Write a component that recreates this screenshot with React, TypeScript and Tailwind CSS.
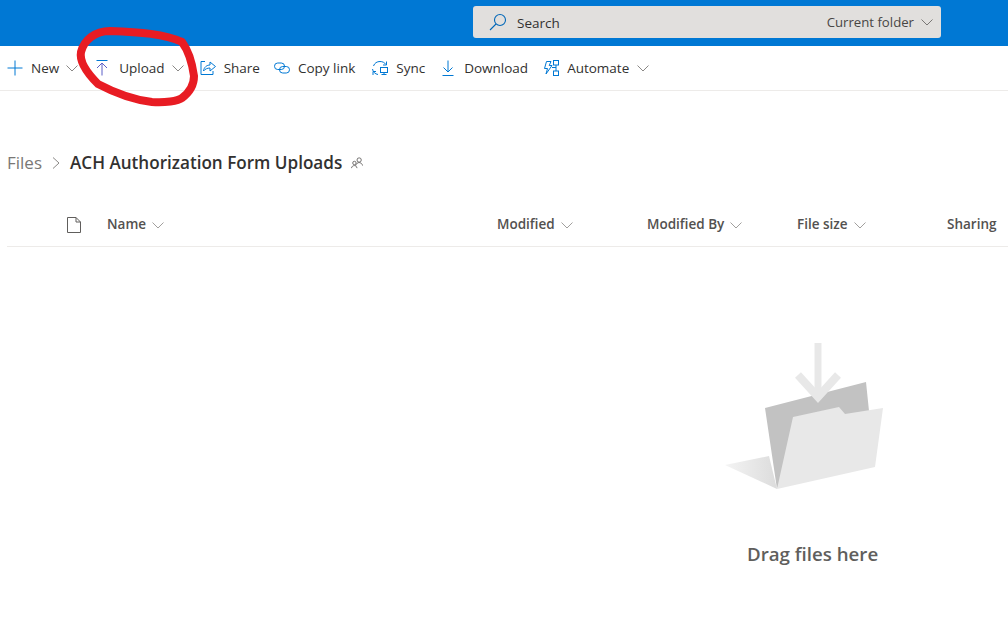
import type { ReactNode } from "react";

const font = { sans: "font-['Open_Sans','Noto_Sans',sans-serif]" };

function Chevron({ className = "" }: { className?: string }) {
  return (
    <svg width="12" height="12" viewBox="0 0 12 12" fill="none" stroke="currentColor" strokeWidth="1" className={className}>
      <path d="M0.5 3.5 L6 9 L11.5 3.5" />
    </svg>
  );
}

function ToolIcon({ children }: { children: ReactNode }) {
  return (
    <svg width="16" height="16" viewBox="0 0 16 16" fill="none" stroke="#0078d4" strokeWidth="1" className="shrink-0">
      {children}
    </svg>
  );
}

function ToolButton({ icon, label, chevron, className }: { icon: ReactNode; label: string; chevron?: boolean; className: string }) {
  return (
    <div className={`flex items-center ${className}`}>
      <ToolIcon>{icon}</ToolIcon>
      <span className="ml-2 text-[13.5px] leading-5 text-[#323130] whitespace-nowrap">{label}</span>
      {chevron && <Chevron className="ml-2 text-[#8a8886]" />}
    </div>
  );
}

function ColumnHead({ label, width, chevron = true }: { label: string; width: string; chevron?: boolean }) {
  return (
    <div className={`flex items-center ${width}`}>
      <span className="text-[13.5px] font-semibold text-[#53514f] whitespace-nowrap">{label}</span>
      {chevron && <Chevron className="ml-1.5 text-[#a19f9d]" />}
    </div>
  );
}

export default function App() {
  return (
    <div className={`relative h-[628px] w-[1008px] overflow-hidden bg-white ${font.sans}`}>
      <header className="flex h-[46px] items-start bg-[#0078d4] pl-[473px] pt-1.5">
        <div className="flex h-8 w-[468px] items-center rounded-[3px] bg-[#e1dfdd] pl-4 pr-2">
          <svg width="18" height="18" viewBox="0 0 18 18" fill="none" stroke="#0067b8" strokeWidth="1.1">
            <circle cx="11" cy="7" r="5.5" />
            <path d="M7 11 L1 17" />
          </svg>
          <span className="ml-[10px] pt-0.5 text-[13.5px] text-[#323130]">Search</span>
          <span className="ml-auto pt-0.5 text-[13.2px] text-[#484644]">Current folder</span>
          <Chevron className="ml-[7px] text-[#797775]" />
        </div>
      </header>

      <nav className="flex h-[45px] items-center border-b border-[#edebe9] pb-px pl-[7px]">
        <div className="flex items-center">
          <ToolIcon>
            <path d="M8 0.5 V15.5 M0.5 8 H15.5" />
          </ToolIcon>
          <span className="ml-2 text-[13.5px] leading-5 text-[#323130]">New</span>
          <Chevron className="ml-[7px] text-[#8a8886]" />
        </div>
        <div className="ml-[16px] flex items-center">
          <svg width="16" height="16" viewBox="0 0 16 16" fill="none" stroke="#5b5fc7" strokeWidth="1">
            <path d="M2.5 0.5 H13.5" stroke="#0078d4" />
            <path d="M8 3 V15.5 M3 8 L8 3 L13 8" />
          </svg>
          <span className="ml-[9px] text-[13.5px] leading-5 text-[#323130]">Upload</span>
          <Chevron className="ml-[7px] text-[#8a8886]" />
        </div>
        <ToolButton
          className="ml-4"
          label="Share"
          icon={
            <>
              <path d="M5 1.5 H1 V14.5 H13 V11" stroke="#0078d4" />
              <path d="M3.5 11 C4 7 7 5 10 5 V2 L15.5 6.5 L10 11 V8 C7.5 8 5 9 3.5 11 Z" />
            </>
          }
        />
        <ToolButton
          className="ml-3.5"
          label="Copy link"
          icon={
            <>
              <rect x="0.5" y="3" width="10" height="6.5" rx="3.2" />
              <rect x="5.5" y="6.5" width="10" height="6.5" rx="3.2" />
            </>
          }
        />
        <ToolButton
          className="ml-[17px]"
          label="Sync"
          icon={
            <>
              <path d="M1.5 6 C2.5 3 5 1.5 8 1.5 C10.5 1.5 12.5 2.5 14 4.5 M14.5 1.5 V5 H11" />
              <path d="M0.5 9 C1 12 3 14 6 14.5 M1 15 V11.5 H4" />
              <rect x="8.5" y="7.5" width="7" height="5" />
              <path d="M12 12.5 V14.5 M9.5 14.5 H14.5" />
            </>
          }
        />
        <ToolButton
          className="ml-[15px]"
          label="Download"
          icon={
            <>
              <path d="M8 0.5 V12 M3.5 7.5 L8 12 L12.5 7.5" />
              <path d="M2.5 15.5 H13.5" />
            </>
          }
        />
        <ToolButton
          className="ml-[15px]"
          label="Automate"
          chevron
          icon={
            <>
              <path d="M3.5 1.5 H8 L6.2 5.5 H9 L3 14 L4.5 8.5 H1.5 Z" />
              <rect x="10.5" y="0.5" width="5" height="4.5" />
              <rect x="10.5" y="11" width="5" height="4.5" />
              <path d="M13 5 V11 M9 7.5 H13" />
            </>
          }
        />
      </nav>

      <div className="mt-[49px] flex h-[46px] items-center pl-[7px]">
        <span className="text-[17px] text-[#797775]">Files</span>
        <svg width="10" height="12" viewBox="0 0 10 12" fill="none" stroke="#8a8886" className="ml-[9px]">
          <path d="M2 0.5 L8 6 L2 11.5" />
        </svg>
        <span className="ml-[9px] text-[17.1px] font-semibold text-[#323130] whitespace-nowrap">ACH Authorization Form Uploads</span>
        <svg width="12" height="12" viewBox="0 0 14 14" fill="none" stroke="#605e5c" strokeWidth="1" className="ml-[9px]">
          <circle cx="9.5" cy="3.5" r="2.5" />
          <path d="M5.5 10 C6 7.5 8 6.5 9.5 6.5 C11 6.5 13 7.5 13.5 10" />
          <circle cx="4" cy="7" r="2" />
          <path d="M0.5 13 C1 10.8 2.5 10 4 10 C5.5 10 6.5 10.8 7 13" />
        </svg>
      </div>

      <div className="ml-[7px] mt-[17px] flex h-[44px] items-center border-b border-[#edebe9]">
        <svg width="14" height="16" viewBox="0 0 14 16" fill="none" stroke="#605e5c" className="ml-[60px]">
          <path d="M0.5 0.5 H9 L13.5 5 V15.5 H0.5 Z M9 0.5 V5 H13.5" />
        </svg>
        <div className="ml-[26px] flex">
          <ColumnHead label="Name" width="w-[390px]" />
          <ColumnHead label="Modified" width="w-[150px]" />
          <ColumnHead label="Modified By" width="w-[150px]" />
          <ColumnHead label="File size" width="w-[150px]" />
          <ColumnHead label="Sharing" width="w-[60px]" chevron={false} />
        </div>
      </div>

      <div className="ml-[725px] mt-[96px] w-[175px]">
        <svg width="160" height="147" viewBox="725 343 160 147">
          <defs>
            <linearGradient id="shade" x1="0" x2="1" y1="0" y2="0">
              <stop offset="0" stopColor="#f4f4f4" />
              <stop offset="1" stopColor="#dcdcdc" />
            </linearGradient>
          </defs>
          <path d="M725 465 L769 456 L777 489 Z" fill="url(#shade)" />
          <path d="M765 408 L866 382 L869 411 L793 450 L777 489 Z" fill="#c2c2c2" />
          <path d="M793 417 L839 407 L845 414 L883 408 L875 467 L777 489 Z" fill="#e8e8e8" />
          <path d="M818 343 V396" stroke="#e8e8e8" strokeWidth="7" fill="none" />
          <path d="M798 375 L818 397 L838 375" stroke="#e8e8e8" strokeWidth="8" fill="none" />
        </svg>
      </div>

      <p className="absolute left-[747px] top-[540px] text-[18.7px] font-semibold text-[#605e5c]">Drag files here</p>

      <svg width="1008" height="628" className="pointer-events-none absolute left-0 top-0" fill="none">
        <path
          d="M182 42 C165 34 140 32 110 31 C95 31 84 40 81 52 C79 62 88 74 98 84 C115 93 135 100 152 102 C165 103 178 101 182 98 C190 92 194 84 194 76 C192 62 188 50 182 42"
          stroke="#e81c23"
          strokeWidth="8"
          strokeLinecap="round"
        />
      </svg>
    </div>
  );
}
